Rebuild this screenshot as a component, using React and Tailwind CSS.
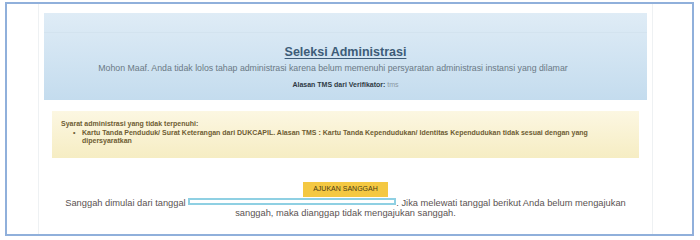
export default function App() {
  return (
    <div className="w-[700px] h-[240px] bg-white pl-[5px] pt-[2px]" style={{ fontFamily: '"Liberation Sans", Arial, sans-serif' }}>
      <div className="w-[689px] h-[234px] border-2 border-[#90b0db] bg-white flex">
        <div className="ml-[31px] w-[615px] h-full border-x border-[#eef1f3] px-[5px] pt-[9px] flex flex-col">
          <div className="h-[87px] bg-gradient-to-b from-[#dfecf6] to-[#c4dcee] flex flex-col items-center">
            <div className="w-full mt-[19px] border-t border-[#d3e3ef]" />
            <div className="mt-[12px] text-[12.5px] leading-[14px] font-bold text-[#3d5c78] underline underline-offset-2">Seleksi Administrasi</div>
            <div className="mt-[4px] mr-[25px] text-[8.75px] leading-[11px] text-[#6a7985]">Mohon Maaf. Anda tidak lolos tahap administrasi karena belum memenuhi persyaratan administrasi instansi yang dilamar</div>
            <div className="mt-[7px] text-[7px] leading-[8px] text-[#2f3a44]"><span className="font-bold">Alasan TMS dari Verifikator:</span> <span className="text-[#8a97a2]">tms</span></div>
          </div>
          <div className="mx-[8px] mt-[11px] h-[47px] bg-gradient-to-b from-[#fcf7e2] to-[#f6edc3] pl-[9px] pt-[9px] text-[7px] leading-[8.5px] font-bold text-[#6e5d33]">
            <div>Syarat administrasi yang tidak terpenuhi:</div>
            <div className="flex pl-[12px]">
              <span className="w-[9px]">•</span>
              <span>Kartu Tanda Penduduk/ Surat Keterangan dari DUKCAPIL. Alasan TMS : Kartu Tanda Kependudukan/ Identitas Kependudukan tidak sesuai dengan yang<br />dipersyaratkan</span>
            </div>
          </div>
          <div className="mt-[24px] flex justify-center">
            <div className="w-[85px] h-[15px] bg-[#f4c842] flex items-center justify-center text-[7px] font-medium text-[#4b3c14]">AJUKAN SANGGAH</div>
          </div>
          <div className="mx-[8px] mt-[1px] text-center text-[9.3px] leading-[10px] text-[#5b5352]">
            Sanggah dimulai dari tanggal <span className="inline-block w-[208px] h-[7px] border-2 border-[#8fd0e3] bg-white align-[1px]" />. Jika melewati tanggal berikut Anda belum mengajukan sanggah, maka dianggap tidak mengajukan sanggah.
          </div>
        </div>
      </div>
    </div>
  );
}
